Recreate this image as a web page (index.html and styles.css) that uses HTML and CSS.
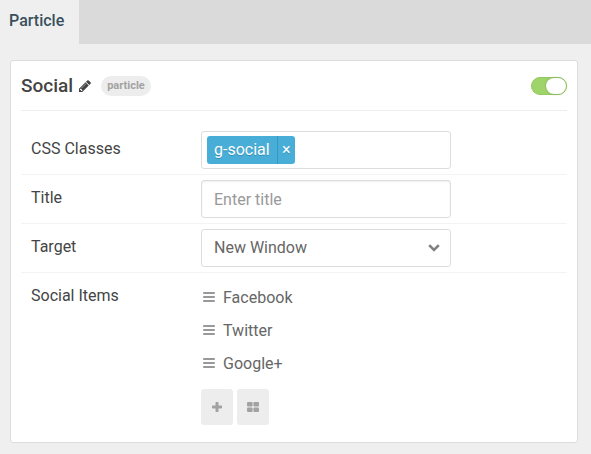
FILE: index.html
```html
<!DOCTYPE html>
<html lang="en">
<head>
<meta charset="utf-8">
<title>Particle</title>
<link rel="stylesheet" href="styles.css">
</head>
<body>
<nav class="tabs"><a class="tab" href="#particle">Particle</a></nav>
<main class="card" id="particle">
  <header class="card-head">
    <h1 class="title">Social</h1>
    <button class="edit" type="button" aria-label="Edit title">
      <svg width="12" height="12" viewBox="0 0 1536 1536"><path fill="currentColor" d="M363 1408l91-91-235-235-91 91v107h128v128h107zM886 480q0-22-22-22-10 0-17 7l-542 542q-7 7-7 17 0 22 22 22 10 0 17-7l542-542q7-7 7-17zM832 288l416 416-832 832H0v-416zM1515 384q0 53-37 90l-166 166-416-416 166-165q36-38 90-38 53 0 91 38l235 234q37 39 37 91z"/></svg>
    </button>
    <span class="badge">particle</span>
    <input class="toggle" type="checkbox" aria-label="Enabled" checked>
  </header>
  <form class="fields">
    <div class="row">
      <label class="label" for="classes">CSS Classes</label>
      <div class="control tags">
        <span class="tag"><span class="tag-text">g-social</span><button class="tag-remove" type="button" aria-label="Remove g-social">×</button></span>
        <input class="tags-input" id="classes" type="text">
      </div>
    </div>
    <div class="row">
      <label class="label" for="title">Title</label>
      <input class="control text" id="title" type="text" placeholder="Enter title">
    </div>
    <div class="row">
      <label class="label" for="target">Target</label>
      <div class="select-wrap">
        <select class="control select" id="target"><option>New Window</option></select>
        <svg class="chevron" width="12" height="8" viewBox="0 0 12 8"><path d="M1.2 1.2L6 6l4.800-4.800" fill="none" stroke="currentColor" stroke-width="2.600"/></svg>
      </div>
    </div>
    <div class="row">
      <span class="label" id="items-label">Social Items</span>
      <div class="collection">
        <ul class="items" aria-labelledby="items-label">
          <li class="item"><svg class="grip" width="12" height="11" viewBox="0 0 12 11"><path d="M.2 1h11.600M.2 5h11.600M.2 9h11.600"/></svg><a class="item-link" href="#facebook">Facebook</a></li>
          <li class="item"><svg class="grip" width="12" height="11" viewBox="0 0 12 11"><path d="M.2 1h11.600M.2 5h11.600M.2 9h11.600"/></svg><a class="item-link" href="#twitter">Twitter</a></li>
          <li class="item"><svg class="grip" width="12" height="11" viewBox="0 0 12 11"><path d="M.2 1h11.600M.2 5h11.600M.2 9h11.600"/></svg><a class="item-link" href="#google">Google+</a></li>
        </ul>
        <div class="actions">
          <button class="action" type="button" aria-label="Add item"><svg width="10" height="10" viewBox="0 0 10 10"><path fill="currentColor" d="M4.200 0h1.600q.7 0 .7.700v2.800h2.800q.7 0 .7.700v1.600q0 .7-.7.700H6.500v2.800q0 .7-.7.700H4.200q-.7 0-.7-.7V6.500H.7Q0 6.500 0 5.800V4.200q0-.7.700-.7h2.800V.7q0-.7.700-.7z"/></svg></button>
          <button class="action" type="button" aria-label="Edit all items"><svg width="12" height="10" viewBox="0 0 12 10"><g fill="currentColor"><rect width="5.600" height="4.600" rx="1"/><rect x="6.400" width="5.600" height="4.600" rx="1"/><rect y="5.400" width="5.600" height="4.600" rx="1"/><rect x="6.400" y="5.400" width="5.600" height="4.600" rx="1"/></g></svg></button>
        </div>
      </div>
    </div>
  </form>
</main>
</body>
</html>
```
FILE: styles.css
```css
* { box-sizing: border-box; }

body {
  margin: 0;
  background: #efefef;
  color: #444;
  font: 16px/24px Roboto, "Liberation Sans", sans-serif;
}

button, input, select { font: inherit; }

button {
  padding: 0;
  border: 0;
  background: none;
  color: inherit;
  cursor: pointer;
}

svg { display: block; }

.tabs { display: flex; background: #dadada; }

.tab {
  padding: 9px 15px 11px 9px;
  background: #efefef;
  color: #38505c;
  font-weight: 500;
  text-decoration: none;
}

.card {
  margin: 16px 13px 11px 10px;
  padding: 0 10px 12px;
  border: 1px solid #dcdcdc;
  border-radius: 3px;
  background: #fff;
}

.card-head {
  display: flex;
  align-items: center;
  height: 50px;
  border-bottom: 1px solid #ededed;
}

.title {
  margin: 0;
  font-size: 19px;
  line-height: 26px;
  font-weight: 500;
}

.edit { margin: 0 10px 0 6px; }

.badge {
  padding: 0 6px;
  border-radius: 10px;
  background: #ededed;
  color: #a2a2a2;
  font-size: 11px;
  line-height: 20px;
  font-weight: 700;
}

.toggle {
  appearance: none;
  display: flex;
  justify-content: flex-end;
  width: 36px;
  height: 18px;
  margin: 0 0 0 auto;
  border: 1px solid #94c95f;
  border-radius: 9px;
  background: #9fd46a;
}

.toggle::before {
  content: "";
  width: 20px;
  height: 16px;
  border-radius: 8px;
  background: #fff;
  box-shadow: 0 0 2px #6f9d45;
}

.fields { padding-top: 15px; }

.row {
  display: flex;
  align-items: flex-start;
  padding: 5px 10px;
  border-bottom: 1px solid #f3f3f3;
}

.row:last-child { border-bottom: 0; }

.label { flex: 0 0 170px; padding-top: 6px; }

.control {
  width: 250px;
  height: 38px;
  border: 1px solid #ddd;
  border-radius: 3px;
  background: #fff;
  color: #666;
}

.tags { display: flex; align-items: center; padding: 0 5px; }

.tag {
  display: flex;
  height: 28px;
  border-radius: 3px;
  background: #48aed7;
  color: #fff;
  line-height: 28px;
  text-shadow: 0 1px 0 #328fb5;
}

.tag-text { padding: 0 7px; }

.tag-remove {
  width: 18px;
  border-left: 1px solid #3798c0;
  text-shadow: inherit;
}

.tags-input {
  flex: 1;
  min-width: 0;
  border: 0;
  outline: 0;
  background: none;
}

.text { padding: 0 12px; box-shadow: inset 0 1px 2px #eee; }

.text::placeholder { color: #999; opacity: 1; }

.select-wrap { position: relative; }

.select { display: block; appearance: none; padding: 0 12px; }

.chevron {
  position: absolute;
  top: 15px;
  right: 11px;
  color: #808080;
  pointer-events: none;
}

.items { margin: 0; padding: 3px 0 0; list-style: none; }

.item {
  display: flex;
  align-items: center;
  gap: 8px;
  height: 33px;
  padding-left: 2px;
}

.item-link { color: #666; text-decoration: none; }

.grip { fill: none; stroke: #999; stroke-width: 1.8; }

.actions { display: flex; gap: 4px; padding-top: 9px; }

.action {
  display: grid;
  place-items: center;
  width: 32px;
  height: 36px;
  border-radius: 3px;
  background: #ededed;
  color: #a2a2a2;
}
```
